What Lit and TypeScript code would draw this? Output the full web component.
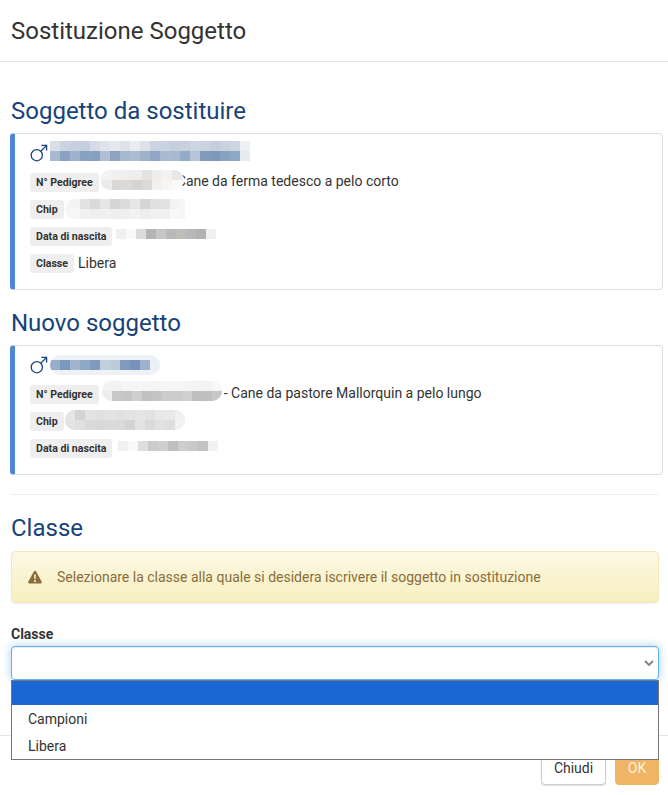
import { LitElement, html, css } from "lit";
import { customElement } from "lit/decorators.js";

const cells = (s: string) => s.trim().split(/\s+/).map((c) => "#" + c);

const NAME1 = [
  "d8dfe9 c9d3e1 c5d0de c5d0de d5dce7 dfe4ec e5e9ef dee3eb e9ecf1 dde2ea cbd4e1 c9d2df c4cedc c7d1de cdd5e2 cad3e0 c4cedc c9d2df ccd6e2 edf0f5",
  "a9b9cf 8ba2c0 9fb2cb 88a3c2 86a0bf b0bfd3 8fa3c1 a5b9d1 aebcd0 a0b1ca 90a6c2 a9bbd0 a9b8cc 92abc7 b5c4d6 809abb 7f98ba 88a3c1 8fa8c4 e6ebf1",
];
const PED1 = [
  "f4f3f2 f1f0ee efeeec eeedeb e4e3e1 eeedeb f3f2f0 e9e8e6",
  "ecebe9 dad8d6 dcdad8 d6d4d2 dcdad8 f2f1ef f7f6f5 fbfafa",
];
const CHIP1 = [
  "f4f4f4 e2e2e2 d9d9d9 e6e6e6 d5d5d3 dbdbdb e6e6e6 d5d5d5 e0e0e0 e2e2e2 f3f3f3",
  "f7f7f7 f1f1f1 efefef f0f0f0 eeeeec efefef f2f2f2 eeeeee f1f1f1 f1f1f1 f8f8f8",
];
const DATA1 = ["f0f0f0 fafafa dcdcdc b4b4b4 c6c6c6 b9b9b9 bebeb8 b8b8b8 b2b2b2 f0f0f0"];
const NAME2 = ["99aecb 7b98bd a2b4cd 8fa8c6 7e9abd c2d0de bccbda 7f9abd 7793b9 9db2cc ecf0f4"];
const PED2 = [
  "f3f3f3 f3f3f3 f6f6f6 f6f6f6 f5f5f5 f4f4f4 f5f5f5 f6f6f6 f4f4f4 f3f3f3 f3f3f3 f7f7f7",
  "eeeeee c7c7c7 c5c5c5 cfcfcf c1c1c1 c5c5c5 cccccc cccccc d0d0d0 bfbfbf c0c0c0 c7c7c7",
];
const CHIP2 = [
  "e6e6e6 d4d4d4 e3e3e3 e0e0e0 e3e3e3 e1e1e1 e3e3e3 e5e5e5 e2e2e2 e8e8e8 e9e9e9 f0f0f0",
  "e3e3e3 e0e0e0 dadada d8d8d8 dadada d9d9d9 d3d3d3 e3e3e3 dadada e1e1e1 dedede f2f2f2",
];
const DATA2 = ["f1f1f1 f9f9f9 dedede cbcbcb cfcfcf bfbfbf cdcdcd c9c9c9 c3c3c3 f2f2f2"];

const MALE = html`<svg class="male" viewBox="0 0 18 18" width="18" height="18" fill="none" stroke="#17427a" stroke-width="1.3">
  <circle cx="6.8" cy="11.2" r="5.6"></circle>
  <path d="M10.8 7.2 16.6 1.4M11.4 1.4h5.2v5.2"></path>
</svg>`;

@customElement("app-root")
export class AppRoot extends LitElement {
  static styles = css`
    :host {
      display: block;
      width: 668px;
      height: 795px;
      overflow: hidden;
      background: #fff;
      font-family: Roboto, "Liberation Sans", sans-serif;
      font-size: 14px;
      color: #333;
    }
    .header {
      height: 61px;
      border-bottom: 1px solid #e5e5e5;
      display: flex;
      align-items: center;
      padding-left: 11px;
      font-size: 24px;
      color: #333;
    }
    .body {
      padding: 35px 5px 0 10px;
    }
    h3 {
      margin: 0 0 8px 1px;
      font-size: 24px;
      font-weight: 400;
      line-height: 28px;
      height: 28px;
      color: #17427a;
    }
    .h3-class {
      margin-bottom: 9px;
    }
    .card {
      background: #fff;
      border: 1px solid #ddd;
      border-left: 5px solid #4d86d6;
      border-radius: 4px;
      padding: 7px 10px 12px 15px;
      margin-bottom: 19px;
    }
    .name {
      height: 20px;
      margin-bottom: 8px;
      display: flex;
      align-items: center;
      gap: 2px;
    }
    .male {
      margin-top: 4px;
      flex: none;
    }
    .row {
      height: 27px;
      display: flex;
      align-items: center;
    }
    .label {
      background: #eee;
      border-radius: 3px;
      height: 19px;
      line-height: 19px;
      padding: 0 6px;
      font-size: 10.6px;
      font-weight: 700;
      color: #333;
      flex: none;
    }
    .value {
      margin: 0 0 2px 4px;
      white-space: nowrap;
    }
    .tail {
      margin: 0 0 3px -7px;
      white-space: nowrap;
    }
    .tail2 {
      margin: 0 0 3px 2px;
      white-space: nowrap;
    }
    .blur {
      position: relative;
      z-index: 1;
      flex: none;
      overflow: hidden;
    }
    .blur.round {
      border-radius: 10px;
    }
    .blur-row {
      display: flex;
      height: 10px;
    }
    .cell {
      width: 10px;
      height: 10px;
      flex: none;
    }
    .name2 {
      margin-top: 4px;
      padding-top: 5px;
      padding-bottom: 5px;
    }
    .ped1 {
      margin: -6px 0 0 1px;
    }
    .chip1 {
      margin: -1px 0 0 1px;
    }
    .blur.chip1 {
      border-radius: 10px 0 0 10px;
    }
    .data1 {
      margin: -5px 0 0 0;
    }
    .ped2 {
      margin: -7px 0 0 3px;
    }
    .chip2 {
      margin: -3px 0 0 1px;
    }
    .data2 {
      margin: -5px 0 0 2px;
    }
    hr {
      border: 0;
      border-top: 1px solid #eee;
      margin: 0 5px 19px 1px;
    }
    .form {
      margin: 0 4px 0 1px;
    }
    .alert {
      height: 52px;
      box-sizing: border-box;
      display: flex;
      align-items: center;
      gap: 15px;
      padding-left: 16px;
      border: 1px solid #f5e8b8;
      border-radius: 4px;
      background: linear-gradient(#fcf8e3, #f8efc0);
      color: #8a6d3b;
      font-size: 14px;
      box-shadow: 0 1px 1px rgba(0, 0, 0, 0.05);
      margin-bottom: 23px;
    }
    .alert svg {
      flex: none;
    }
    .field-label {
      font-size: 14px;
      font-weight: 700;
      line-height: 16px;
      margin-bottom: 4px;
      color: #333;
    }
    .select-wrap {
      position: relative;
      height: 34px;
    }
    .select {
      height: 34px;
      box-sizing: border-box;
      border: 1px solid #66afe9;
      border-radius: 4px;
      background: #fff;
      box-shadow: inset 0 1px 1px rgba(0, 0, 0, 0.075), 0 0 8px rgba(102, 175, 233, 0.6);
      display: flex;
      align-items: center;
      justify-content: flex-end;
      padding-right: 4px;
    }
    .menu {
      position: absolute;
      left: 0;
      right: 0;
      top: 34px;
      z-index: 5;
      background: #fff;
      border: 1px solid #767676;
      box-sizing: border-box;
      height: 80px;
    }
    .opt {
      height: 27px;
      line-height: 28px;
      padding-left: 16px;
      color: #333;
    }
    .opt.sel {
      height: 24px;
      background: #1967d2;
    }
    .footer {
      margin-top: 55px;
      border-top: 1px solid #e5e5e5;
      padding: 15px 9px 0 0;
      display: flex;
      justify-content: flex-end;
      gap: 9px;
    }
    .btn {
      height: 34px;
      box-sizing: border-box;
      border-radius: 4px;
      border: 1px solid #ccc;
      background: #fff;
      color: #333;
      display: flex;
      align-items: center;
      justify-content: center;
      font-size: 14px;
    }
    .chiudi {
      width: 65px;
      box-shadow: 0 1px 1px rgba(0, 0, 0, 0.12);
    }
    .ok {
      width: 44px;
      background: #efb564;
      border-color: #efb564;
      color: #fdf1df;
    }
  `;

  private blur(rows: string[], cls: string, pad: number, round = false, halo = "#f6f6f6") {
    return html`<div
      class="blur ${cls} ${round ? "round" : ""}"
      style="padding-left:${pad}px;padding-right:${pad}px;background:${halo}"
    >
      ${rows.map(
        (r) => html`<div class="blur-row">
          ${cells(r).map((c) => html`<span class="cell" style="background:${c}"></span>`)}
        </div>`
      )}
    </div>`;
  }

  render() {
    return html`
      <div class="header">Sostituzione Soggetto</div>
      <div class="body">
        <h3>Soggetto da sostituire</h3>
        <div class="card">
          <div class="name">${MALE}${this.blur(NAME1, "", 0, false, "#fff")}</div>
          <div class="row">
            <span class="label">N° Pedigree</span>${this.blur(PED1, "ped1", 2, true, "#f3f3f2")}<span class="tail">Cane da ferma tedesco a pelo corto</span>
          </div>
          <div class="row">
            <span class="label">Chip</span>${this.blur(CHIP1, "chip1", 5, true, "#f6f6f6")}
          </div>
          <div class="row">
            <span class="label">Data di nascita</span>${this.blur(DATA1, "data1", 4, false, "#fff")}
          </div>
          <div class="row">
            <span class="label">Classe</span><span class="value">Libera</span>
          </div>
        </div>

        <h3>Nuovo soggetto</h3>
        <div class="card">
          <div class="name">${MALE}${this.blur(NAME2, "name2", 0, true, "#eef1f5")}</div>
          <div class="row">
            <span class="label">N° Pedigree</span>${this.blur(PED2, "ped2", 0, true, "#f3f3f3")}<span class="tail2">- Cane da pastore Mallorquin a pelo lungo</span>
          </div>
          <div class="row">
            <span class="label">Chip</span>${this.blur(CHIP2, "chip2", 0, true, "#e6e6e6")}
          </div>
          <div class="row">
            <span class="label">Data di nascita</span>${this.blur(DATA2, "data2", 4, false, "#fff")}
          </div>
        </div>

        <hr />
        <h3 class="h3-class">Classe</h3>
        <div class="form">
          <div class="alert">
            <svg viewBox="0 0 16 16" width="14" height="14">
              <path fill="#8a6d3b" fill-rule="evenodd" d="M8 .8c.5 0 .9.3 1.2.7l6.5 11.8c.5 1-.1 2-1.2 2H1.5c-1.1 0-1.7-1-1.2-2L6.8 1.5C7.1 1.1 7.5.8 8 .8ZM7 5l.3 5.4h1.4L9 5H7Zm1 6.5a1.2 1.2 0 1 0 0 2.4 1.2 1.2 0 0 0 0-2.4Z"></path>
            </svg>
            <span>Selezionare la classe alla quale si desidera iscrivere il soggetto in sostituzione</span>
          </div>
          <div class="field-label">Classe</div>
          <div class="select-wrap">
            <div class="select">
              <svg viewBox="0 0 10 6" width="10" height="6" fill="none" stroke="#808080" stroke-width="1.8">
                <path d="M1 1l4 4 4-4"></path>
              </svg>
            </div>
            <div class="menu">
              <div class="opt sel"></div>
              <div class="opt">Campioni</div>
              <div class="opt">Libera</div>
            </div>
          </div>
        </div>
      </div>
      <div class="footer">
        <div class="btn chiudi">Chiudi</div>
        <div class="btn ok">OK</div>
      </div>
    `;
  }
}
